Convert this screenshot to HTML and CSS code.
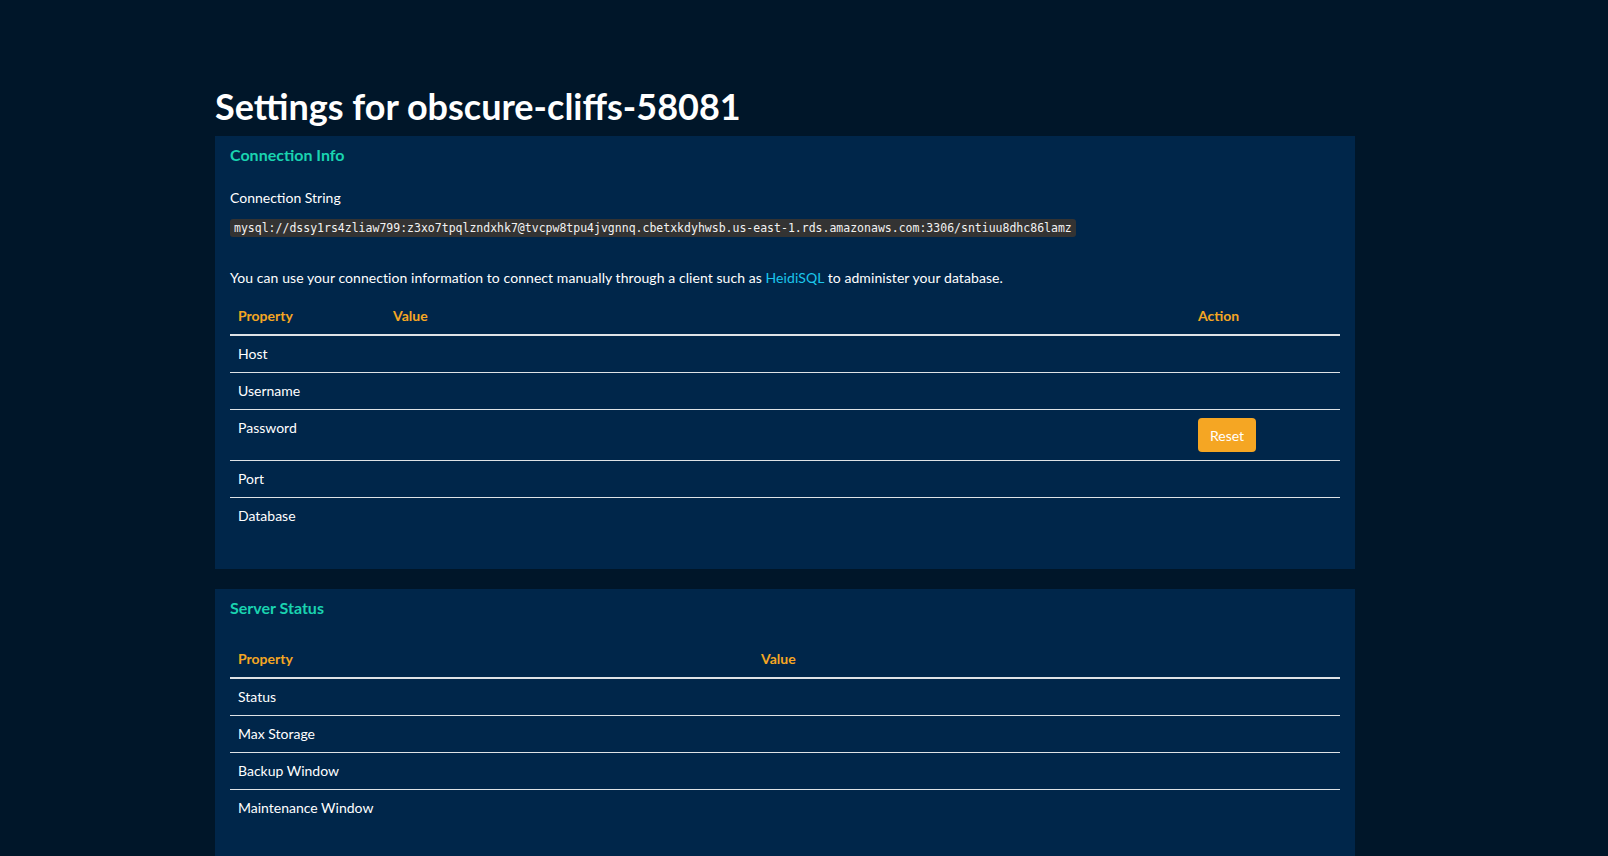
FILE: index.html
```html
<!DOCTYPE html>
<html lang="en">
<head>
<meta charset="utf-8">
<title>Settings for obscure-cliffs-58081</title>
<link rel="stylesheet" href="styles.css">
</head>
<body>
<main class="page">
  <h1 class="title">Settings for obscure-cliffs-58081</h1>

  <section class="panel panel-conn">
    <h2 class="panel-title">Connection Info</h2>
    <div class="label">Connection String</div>
    <code class="conn">mysql://dssy1rs4zliaw799:z3xo7tpqlzndxhk7@tvcpw8tpu4jvgnnq.cbetxkdyhwsb.us-east-1.rds.amazonaws.com:3306/sntiuu8dhc86lamz</code>
    <p class="note">You can use your connection information to connect manually through a client such as <a href="#" class="link">HeidiSQL</a> to administer your database.</p>
    <table class="grid grid-conn">
      <thead>
        <tr><th class="c-prop">Property</th><th class="c-val">Value</th><th class="c-act">Action</th></tr>
      </thead>
      <tbody>
        <tr><td>Host</td><td></td><td></td></tr>
        <tr><td>Username</td><td></td><td></td></tr>
        <tr><td>Password</td><td></td><td><button class="btn" type="button">Reset</button></td></tr>
        <tr><td>Port</td><td></td><td></td></tr>
        <tr><td>Database</td><td></td><td></td></tr>
      </tbody>
    </table>
  </section>

  <section class="panel panel-status">
    <h2 class="panel-title">Server Status</h2>
    <table class="grid grid-status">
      <thead>
        <tr><th class="s-prop">Property</th><th>Value</th></tr>
      </thead>
      <tbody>
        <tr><td>Status</td><td></td></tr>
        <tr><td>Max Storage</td><td></td></tr>
        <tr><td>Backup Window</td><td></td></tr>
        <tr><td>Maintenance Window</td><td></td></tr>
      </tbody>
    </table>
  </section>
</main>
</body>
</html>
```

FILE: styles.css
```css
html, body {
  margin: 0;
  padding: 0;
}

body {
  background: #001629;
  color: #ffffff;
  font-family: Lato, "Open Sans", "Noto Sans", sans-serif;
  font-size: 14px;
  line-height: 20px;
  min-height: 856px;
}

.page {
  width: 1140px;
  margin-left: 215px;
  padding-top: 86px;
}

.title {
  margin: 0 0 10px 0;
  font-size: 36px;
  line-height: 40px;
  font-weight: 700;
  color: #ffffff;
}

.panel {
  background: #00264a;
  padding: 9px 15px 35px 15px;
}

.panel + .panel {
  margin-top: 20px;
}

.panel-title {
  margin: 0;
  font-size: 16px;
  line-height: 20px;
  font-weight: 700;
  color: #1ad3b0;
}

.label {
  margin-top: 23px;
}

.conn {
  display: inline-block;
  margin-top: 11px;
  padding: 0 4px;
  line-height: 18px;
  background: #333333;
  border-radius: 3px;
  color: #f2f2f2;
  font-family: "DejaVu Sans Mono", "Liberation Mono", monospace;
  font-size: 11.5px;
  font-weight: 400;
}

.note {
  margin: 31px 0 0 0;
  letter-spacing: 0.07px;
}

.link {
  color: #1bc6ec;
  text-decoration: none;
}

.grid {
  width: 100%;
  border-collapse: collapse;
  margin-top: 10px;
}

.grid-status {
  margin-top: 23px;
}

.grid th {
  text-align: left;
  font-weight: 700;
  color: #f5a623;
  padding: 8px;
  border-bottom: 2px solid #dee2e6;
  vertical-align: bottom;
}

.grid td {
  padding: 8px;
  vertical-align: top;
  border-top: 1px solid #dee2e6;
  height: 20px;
}

.grid tbody tr:first-child td {
  border-top: none;
}

.c-prop { width: 139px; }
.c-act { width: 134px; }
.s-prop { width: 507px; }

.btn {
  display: block;
  height: 34px;
  padding: 0 12px;
  border: none;
  border-radius: 4px;
  background: #f5a623;
  color: #ffffff;
  font-family: inherit;
  font-size: 14px;
  cursor: pointer;
}
```
